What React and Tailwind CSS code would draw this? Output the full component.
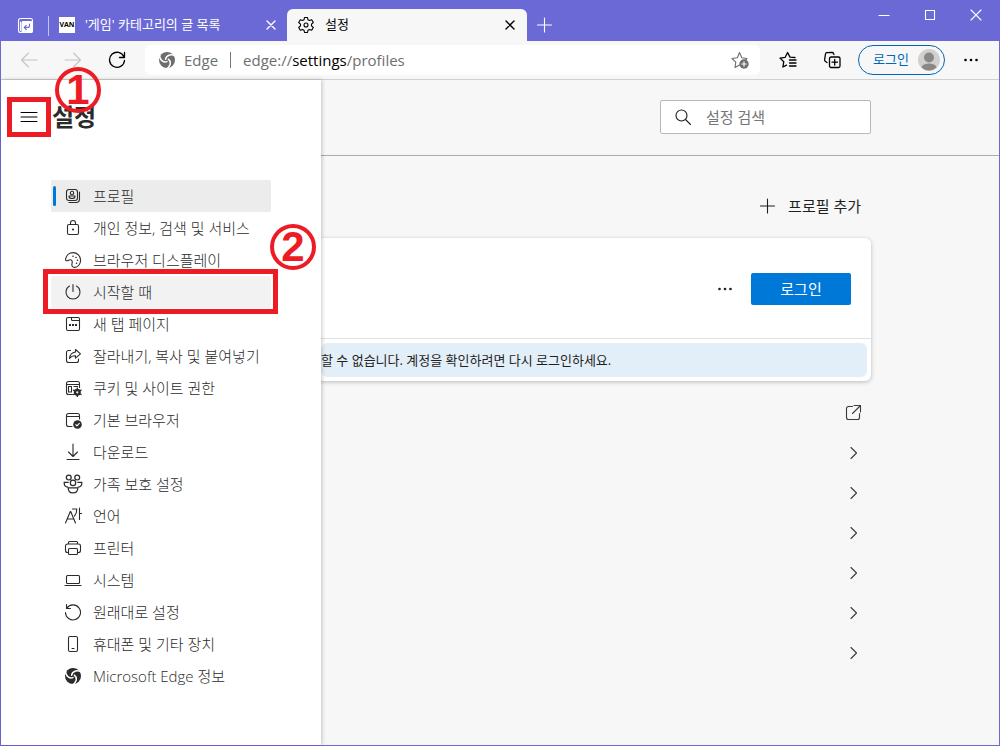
import clsx from "clsx";

// 18x18 기준 선 아이콘 공통 래퍼
function Icon({ children, className = "size-[18px]" }) {
  return (
    <svg
      viewBox="0 0 18 18"
      fill="none"
      stroke="currentColor"
      strokeWidth="1.1"
      strokeLinecap="round"
      strokeLinejoin="round"
      aria-hidden="true"
      className={clsx("shrink-0", className)}
    >
      {children}
    </svg>
  );
}

// 흰 배경 위에서만 쓰므로 소용돌이 틈은 흰 선으로 그린다
function EdgeLogo() {
  return (
    <Icon>
      <circle cx="9" cy="9" r="8" fill="currentColor" stroke="none" />
      <g stroke="white" strokeWidth="1.5">
        <path d="M17.500 5.500C14 2.600 8.500 3.600 7.600 8.200" />
        <path d="M17.500 5.500C14 2.600 8.500 3.600 7.600 8.200" transform="rotate(120 9 9)" />
        <path d="M17.500 5.500C14 2.600 8.500 3.600 7.600 8.200" transform="rotate(240 9 9)" />
      </g>
    </Icon>
  );
}

function Close() {
  return (
    <Icon>
      <path d="M5 5l8 8M13 5l-8 8" strokeWidth="1.4" />
    </Icon>
  );
}

function Dots() {
  return (
    <Icon>
      <g fill="currentColor" stroke="none">
        <circle cx="3.500" cy="9" r="1.300" />
        <circle cx="9" cy="9" r="1.300" />
        <circle cx="14.500" cy="9" r="1.300" />
      </g>
    </Icon>
  );
}

const menus = [
  {
    label: "프로필",
    icon: (
      <Icon>
        <rect x="2.500" y="2.500" width="11" height="11" rx="2.500" />
        <circle cx="8" cy="6" r="1.700" />
        <path d="M5 9h6v.5c0 1.200-1.300 2-3 2s-3-.8-3-2ZM15.500 5v7c0 2-1.500 3.500-3.500 3.500H5" />
      </Icon>
    ),
  },
  {
    label: "개인 정보, 검색 및 서비스",
    icon: (
      <Icon>
        <rect x="3.500" y="5.500" width="11" height="10" rx="1.500" />
        <path d="M6.500 5.500V4a2.500 2.500 0 0 1 5 0v1.500" />
        <circle cx="9" cy="10.500" r=".5" fill="currentColor" />
      </Icon>
    ),
  },
  {
    label: "브라우저 디스플레이",
    icon: (
      <Icon>
        <path d="M1.600 8C2.300 4.400 5.300 1.600 9 1.600c4.300 0 7.600 3.300 7.600 7.500 0 4-2.700 7.300-6 7.300-2.300 0-3.100-1.800-2.600-3.700.5-1.800.3-3.400-1.300-3.900-1.500-.5-2 .7-3.400.9C2 9.800 1.300 9.200 1.600 8Z" />
        <g fill="currentColor" stroke="none">
          <circle cx="9" cy="5.300" r=".8" />
          <circle cx="12" cy="6.500" r=".8" />
          <circle cx="13.500" cy="9.300" r=".8" />
          <circle cx="12.500" cy="12.300" r=".8" />
        </g>
      </Icon>
    ),
  },
  {
    label: "시작할 때",
    marked: true,
    icon: (
      <Icon>
        <path d="M9 1.500v7M5.500 3a7 7 0 1 0 7 0" />
      </Icon>
    ),
  },
  {
    label: "새 탭 페이지",
    icon: (
      <Icon>
        <rect x="2.500" y="2.500" width="13" height="13" rx="1.500" />
        <path d="M7.500 2.500v2a1 1 0 0 0 1 1h7" />
        <path d="M5 10h2M8 10h2M11 10h2" strokeWidth="2" strokeLinecap="butt" />
      </Icon>
    ),
  },
  {
    label: "잘라내기, 복사 및 붙여넣기",
    icon: (
      <Icon>
        <path d="M6.500 3.500h-2a2 2 0 0 0-2 2v8a2 2 0 0 0 2 2h8a2 2 0 0 0 2-2v-1.500" />
        <path d="M11.500 2.500l5 4.300-5 4.300V8.800C8.800 8.700 7 9.500 5.500 11.500c.3-3.600 2.300-6 6-6.500Z" />
      </Icon>
    ),
  },
  {
    label: "쿠키 및 사이트 권한",
    icon: (
      <Icon>
        <path d="M8.500 15.500h-4a2 2 0 0 1-2-2v-9a2 2 0 0 1 2-2h9a2 2 0 0 1 2 2v4M2.500 5.500h13" />
        <rect x="4.500" y="7.500" width="3" height="5.500" />
        <path d="M10 7.500h3.500" />
        <circle cx="13.300" cy="13.300" r="2.300" strokeWidth="2.400" />
        <path
          d="M13.300 8.900v8.800M9.500 11.100l7.600 4.400M9.500 15.500l7.600-4.400"
          strokeWidth="1.300"
          strokeDasharray="1.600 5.600"
        />
      </Icon>
    ),
  },
  {
    label: "기본 브라우저",
    icon: (
      <Icon>
        <path d="M8 15.500H4.500a2 2 0 0 1-2-2v-9a2 2 0 0 1 2-2h9a2 2 0 0 1 2 2V8M2.500 5.500h13" />
        <circle cx="13.500" cy="13.500" r="4.300" fill="currentColor" stroke="none" />
        <path d="M11.800 13.600l1.200 1.200 2.300-2.400" stroke="white" />
      </Icon>
    ),
  },
  {
    label: "다운로드",
    icon: (
      <Icon>
        <path d="M9 1v12M4.500 9L9 13.500 13.500 9M3 16.500h12" />
      </Icon>
    ),
  },
  {
    label: "가족 보호 설정",
    icon: (
      <Icon className="-mx-px size-5">
        <circle cx="5.200" cy="3.200" r="2.200" />
        <circle cx="12.800" cy="3.200" r="2.200" />
        <circle cx="9" cy="8" r="2.400" />
        <path d="M4.700 7.500H1c0 2.500 1 4.300 3.300 4.300M13.300 7.500H17c0 2.500-1 4.300-3.300 4.300M4.700 12.500h8.600c0 2.800-1.500 4.500-4.300 4.500s-4.300-1.700-4.300-4.500Z" />
      </Icon>
    ),
  },
  {
    label: "언어",
    icon: (
      <Icon>
        <path d="M1.500 16L6.300 4.500h.4L11.500 16M3.200 12h6.600M8.500 2h4.300c0 3-.6 5.300-2.300 7M15.500 1v11.500M15.500 6.500H17.500" />
      </Icon>
    ),
  },
  {
    label: "프린터",
    icon: (
      <Icon>
        <path d="M4.500 13.500h-1a2 2 0 0 1-2-2V7a2 2 0 0 1 2-2h11a2 2 0 0 1 2 2v4.500a2 2 0 0 1-2 2h-1M4.500 5V3.500a1 1 0 0 1 1-1h7a1 1 0 0 1 1 1V5" />
        <rect x="4.500" y="9.500" width="9" height="6" rx="1" />
      </Icon>
    ),
  },
  {
    label: "시스템",
    icon: (
      <Icon>
        <rect x="2.500" y="4.500" width="13" height="8" rx="1" />
        <path d="M1 14.500h16" />
      </Icon>
    ),
  },
  {
    label: "원래대로 설정",
    icon: (
      <Icon>
        <path d="M2.500 1.500v4h4M2.800 5.200A7.500 7.500 0 1 1 1.500 9.500" />
      </Icon>
    ),
  },
  {
    label: "휴대폰 및 기타 장치",
    icon: (
      <Icon>
        <rect x="4.500" y="1.500" width="9" height="15" rx="1.500" />
        <path d="M8 13.500h2" />
      </Icon>
    ),
  },
  { label: "Microsoft Edge 정보", icon: <EdgeLogo /> },
];

// 설명용 빨간 번호 동그라미
function Badge({ num, className }) {
  return (
    <span
      className={clsx(
        "absolute z-20 flex size-[46px] items-center justify-center rounded-full border-4 border-[#ed1c24] font-['Liberation_Sans',sans-serif] text-[42px] leading-none font-bold text-[#ed1c24]",
        className
      )}
    >
      {num}
    </span>
  );
}

function TitleBar() {
  return (
    <header className="flex h-10 bg-[#6b69d6] text-white">
      <button aria-label="탭 작업" className="mt-2 ml-[15px] flex h-8 w-[18px] items-center">
        <Icon>
          <path d="M16.500 5.500v9a2 2 0 0 1-2 2h-10a2 2 0 0 1-2-2v-10a2 2 0 0 1 2-2h10a2 2 0 0 1 2 2v1M4.500 6v8.500" />
          <rect x="6" y="5.500" width="10" height="11" rx="1" fill="currentColor" />
          <path d="M13.500 8v1.500a2 2 0 0 1-2 2H8.500M10.300 9.500l-2 2 2 2" stroke="#6b69d6" />
        </Icon>
      </button>
      <div className="mt-[15px] ml-[14px] h-5 w-px bg-white/60" />
      <div className="mt-2 ml-[10px] flex h-8 w-[221px] items-center">
        <button className="flex flex-1 items-center gap-2.5 text-left text-[13px]">
          <span className="flex size-4 items-center justify-center bg-white text-[7px] font-bold text-black">
            VAN
          </span>
          '게임' 카테고리의 글 목록
        </button>
        <button aria-label="탭 닫기">
          <Close />
        </button>
      </div>
      <div className="mt-2 ml-[7px] flex h-8 w-60 items-center rounded-t-md bg-[#f7f7f7] pr-2 pl-2.5 text-black">
        <button className="flex flex-1 items-center gap-2.5 text-left text-[13px]">
          <Icon>
            <path d="M7.500 1.500h3l.5 2.300 1.500.8 2.200-.8 1.600 2.700-1.800 1.600v1.800l1.800 1.600-1.600 2.700-2.200-.8-1.500.8-.5 2.300h-3L7 14.200l-1.500-.8-2.200.8-1.600-2.700 1.800-1.600V8.100L1.700 6.500l1.600-2.700 2.200.8L7 3.800Z" />
            <circle cx="9" cy="9" r="2" />
          </Icon>
          설정
        </button>
        <button aria-label="탭 닫기">
          <Close />
        </button>
      </div>
      <button aria-label="새 탭" className="mt-2 ml-2 flex h-8 items-center">
        <Icon>
          <path d="M9.500 2v14M2.500 9h14" />
        </Icon>
      </button>
      <div className="ml-auto flex h-7 items-center gap-7 pr-[14px]">
        <button aria-label="최소화">
          <Icon>
            <path d="M4 9.500h10" />
          </Icon>
        </button>
        <button aria-label="최대화">
          <Icon>
            <rect x="4.500" y="4.500" width="9" height="9" />
          </Icon>
        </button>
        <button aria-label="닫기">
          <Icon>
            <path d="M4 4l10 10M14 4L4 14" />
          </Icon>
        </button>
      </div>
    </header>
  );
}

function Toolbar() {
  return (
    <div className="flex h-[39px] items-center border-b border-[#d0d0d0] bg-[#f7f7f7] text-black">
      <div className="flex w-36 items-center gap-[26px] pl-[19px]">
        <button aria-label="뒤로" className="text-[#c4c4c4]">
          <Icon>
            <path d="M17 9H1.500M8.500 2L1.500 9l7 7" />
          </Icon>
        </button>
        <button aria-label="앞으로" className="text-[#c4c4c4]">
          <Icon>
            <path d="M1 9h15.500M9.500 2l7 7-7 7" />
          </Icon>
        </button>
        <button aria-label="새로 고침">
          <Icon>
            <path d="M16.500 1.500v5h-5M16 6A7.500 7.500 0 1 0 16.500 9.500" strokeWidth="1.300" />
          </Icon>
        </button>
      </div>
      <div className="flex h-[30px] min-w-0 flex-1 items-center rounded-md bg-white pr-[11px] pl-[13px] text-[15px] text-[#6e6e6e]">
        <EdgeLogo />
        <span className="ml-2">Edge</span>
        <span className="mx-3 h-4 w-px bg-[#767676]" />
        <span role="textbox" aria-label="주소" className="flex-1">
          edge://<span className="text-black">settings</span>/profiles
        </span>
        <button aria-label="즐겨찾기에 추가">
          <Icon>
            <path d="M8.500 14L4 16.500l.8-5.300L1 7.500l5.300-.8L8.500 1.500l2.300 5.200 5.200.8-1.500 1.500" />
            <circle cx="13" cy="13" r="4.700" fill="currentColor" stroke="none" />
            <path d="M13 10.800v4.400M10.800 13h4.400" stroke="white" />
          </Icon>
        </button>
      </div>
      <div className="flex items-center pr-[19px] pl-[19px]">
        <button aria-label="즐겨찾기">
          <Icon>
            <path
              d="M16 6.500l-5-.4-2.400-4.600L6.200 6.300l-5.200.8 3.800 3.600-.9 5.300 3.600-1.900M10.500 9H17M10.500 12H17M10.500 15H17"
              strokeWidth="1.300"
            />
          </Icon>
        </button>
        <button aria-label="컬렉션" className="ml-[26px]">
          <Icon>
            <path
              d="M4 11.500l-1.800-1.300a1.500 1.500 0 0 1-.6-1.500L2.500 3a1.500 1.500 0 0 1 1.300-1.300L9 1.500a1.500 1.500 0 0 1 1.500 1L11 3.500"
              strokeWidth="1.300"
            />
            <rect x="6.500" y="6" width="10.500" height="10.500" rx="1.500" strokeWidth="1.300" />
            <path d="M11.700 8.500v5.500M9 11.200h5.500" strokeWidth="1.300" />
          </Icon>
        </button>
        <button className="ml-[17px] flex h-[30px] w-[87px] items-center justify-between rounded-full border border-[#0067b8] pr-1 pl-3.5 text-[13px] text-[#0067b8]">
          로그인
          <svg viewBox="0 0 22 22" className="size-[22px]" aria-hidden="true">
            <circle cx="11" cy="11" r="11" fill="#d2d0ce" />
            <circle cx="11" cy="8.500" r="5" fill="#8a8886" />
            <path d="M3.500 18.500c1-3 3.500-4 7.500-4s6.500 1 7.500 4a11 11 0 0 1-15 0Z" fill="#8a8886" />
          </svg>
        </button>
        <button aria-label="설정 및 기타" className="ml-[17px]">
          <Dots />
        </button>
      </div>
    </div>
  );
}

function SideMenu() {
  return (
    <aside className="relative z-10 w-80 shrink-0 bg-white shadow-[1px_0_4px_rgba(0,0,0,0.22)]">
      <div className="flex h-[100px] items-start pt-[17px] pl-1.5">
        <button
          aria-label="메뉴"
          className="flex h-10 w-11 items-center justify-center border-5 border-[#ed1c24]"
        >
          <Icon>
            <path d="M1 4.500h16M1 9h16M1 13.500h16" />
          </Icon>
        </button>
        <h1 className="ml-px text-2xl leading-10 font-bold text-[#2b2b2b]">설정</h1>
      </div>
      <Badge num="1" className="-top-[13px] left-[54px]" />
      <Badge num="2" className="top-36 left-[269px]" />
      <nav className="px-[50px]">
        {menus.map((menu, i) => (
          <a
            key={menu.label}
            href="#"
            className={clsx(
              "relative flex h-8 items-center rounded-xs pl-0.5 text-[15px] font-light text-[#2b2b2b]",
              i === 0 && "bg-[#ececec]",
              menu.marked && "bg-[#f2f2f2]"
            )}
          >
            <span className={clsx("h-5 w-[3px] rounded-xs", i === 0 && "bg-[#0078d7]")} />
            <span className="mr-[11px] ml-2 flex">{menu.icon}</span>
            {menu.label}
            {menu.marked && (
              <span className="absolute -top-[7px] -right-[7px] -bottom-1.5 -left-2 z-10 border-5 border-[#ed1c24]" />
            )}
          </a>
        ))}
      </nav>
    </aside>
  );
}

function ProfilePage() {
  return (
    <main className="min-w-0 flex-1 text-[15px] text-[#1f1f1f]">
      <div className="flex h-[76px] justify-end border-b border-[#ababab] pt-5 pr-32">
        <label className="flex h-[34px] w-[211px] items-center rounded-xs border border-[#b8b8b8] bg-white pl-[13px]">
          <Icon>
            <circle cx="7.500" cy="7.500" r="5.500" />
            <path d="M11.500 11.500l5 5" />
          </Icon>
          <input
            type="text"
            aria-label="설정 검색"
            placeholder="설정 검색"
            className="ml-3.5 w-full min-w-0 outline-none placeholder:text-[#767676]"
          />
        </label>
      </div>

      <div className="-ml-1 pr-32">
        <div className="flex h-[82px] items-center justify-end pt-[18px] pr-2.5">
          <button className="flex items-center gap-3">
            <Icon>
              <path d="M9.500 2v14M2.500 9h14" />
            </Icon>
            프로필 추가
          </button>
        </div>

        <section className="rounded-md bg-white shadow-[0_1px_4px_rgba(0,0,0,0.25)]">
          <div className="flex h-[101px] items-center justify-end gap-[17px] border-b border-[#e1e1e1] pt-0.5 pr-5">
            <button aria-label="추가 작업">
              <Dots />
            </button>
            <button className="h-8 w-[100px] rounded-xs bg-[#0078d7] text-white">로그인</button>
          </div>
          <div className="p-1">
            <p className="h-[34px] overflow-hidden rounded-md bg-[#e3eff8] text-[13px] leading-[34px] whitespace-nowrap">
              할 수 없습니다. 계정을 확인하려면 다시 로그인하세요.
            </p>
          </div>
        </section>

        <ul className="mt-3 pr-[9px]">
          {["계정 관리", "동기화", "개인 정보", "암호", "결제 정보", "주소", "가져오기"].map(
            (name, i) => (
              <li key={name} className="flex h-10 items-center justify-end">
                <a href="#" aria-label={name} className="text-[#3b3b3b]">
                  {i === 0 ? (
                    <Icon>
                      <path d="M8.500 2.500H4.500a2 2 0 0 0-2 2v9a2 2 0 0 0 2 2h9a2 2 0 0 0 2-2V9.500M10 1.500h6.500V8M16 2L8.500 9.500" />
                    </Icon>
                  ) : (
                    <Icon>
                      <path d="M7 3.500L12.500 9 7 14.500" />
                    </Icon>
                  )}
                </a>
              </li>
            )
          )}
        </ul>
      </div>
    </main>
  );
}

export default function App() {
  return (
    <div className="flex min-h-screen flex-col border border-[#6b69d6] bg-[#f7f7f7] font-['Open_Sans','Noto_Sans_CJK_KR',sans-serif]">
      <TitleBar />
      <Toolbar />
      <div className="flex flex-1">
        <SideMenu />
        <ProfilePage />
      </div>
    </div>
  );
}
